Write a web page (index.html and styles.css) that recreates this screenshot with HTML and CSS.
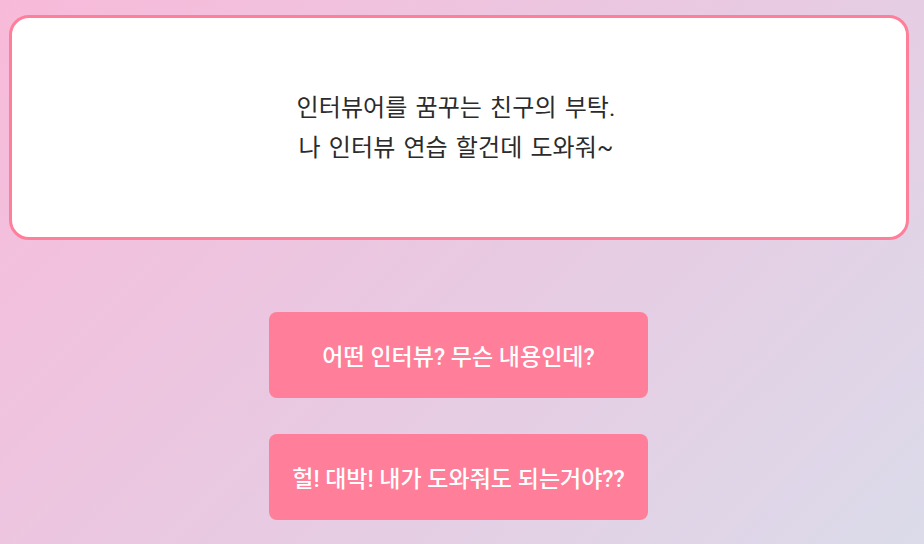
FILE: index.html
```html
<!DOCTYPE html>
<html lang="ko">
<head>
    <meta charset="UTF-8">
    <meta name="viewport" content="width=device-width, initial-scale=1.0">
    <title>인터뷰 연습</title>
    <link rel="stylesheet" href="styles.css">
</head>
<body>
    <div class="container">
        <div class="message-box">
            <p>인터뷰어를 꿈꾸는 친구의 부탁.<br>나 인터뷰 연습 할건데 도와줘~</p>
        </div>
        <div class="choices">
            <button class="choice-button">어떤 인터뷰? 무슨 내용인데?</button>
            <button class="choice-button">헐! 대박! 내가 도와줘도 되는거야??</button>
        </div>
    </div>
</body>
</html>
```

FILE: styles.css
```css
html, body {
    height: 100%;
}
body {
    font-family: Roboto, "Noto Sans CJK KR", sans-serif;
    margin: 0;
    background: linear-gradient(135deg, #f8bad9 0%, #e9c9e2 50%, #dbdbea 100%);
    color: #333;
    overflow: hidden;
}
.container {
    margin: 0 15px 0 9px;
    padding-top: 15px;
}
.message-box {
    height: 219px;
    background: white;
    border: 3px solid #ff7f9b;
    border-radius: 20px;
    display: flex;
    align-items: center;
    justify-content: center;
    text-align: center;
}
.message-box p {
    margin: 0 6px 0 0;
    font-size: 24px;
    line-height: 40px;
    letter-spacing: 0.1px;
    word-spacing: 2px;
    color: #2b2b2b;
}
.choices {
    display: flex;
    flex-direction: column;
    align-items: center;
    gap: 36px;
    margin-top: 72px;
    padding-right: 1px;
}
.choice-button {
    width: 379px;
    height: 86px;
    font-family: inherit;
    font-size: 23px;
    font-weight: 500;
    color: white;
    background-color: #ff7e99;
    border: none;
    border-radius: 8px;
    cursor: pointer;
}
.choice-button:hover {
    background-color: #ff6a8a;
}
```
